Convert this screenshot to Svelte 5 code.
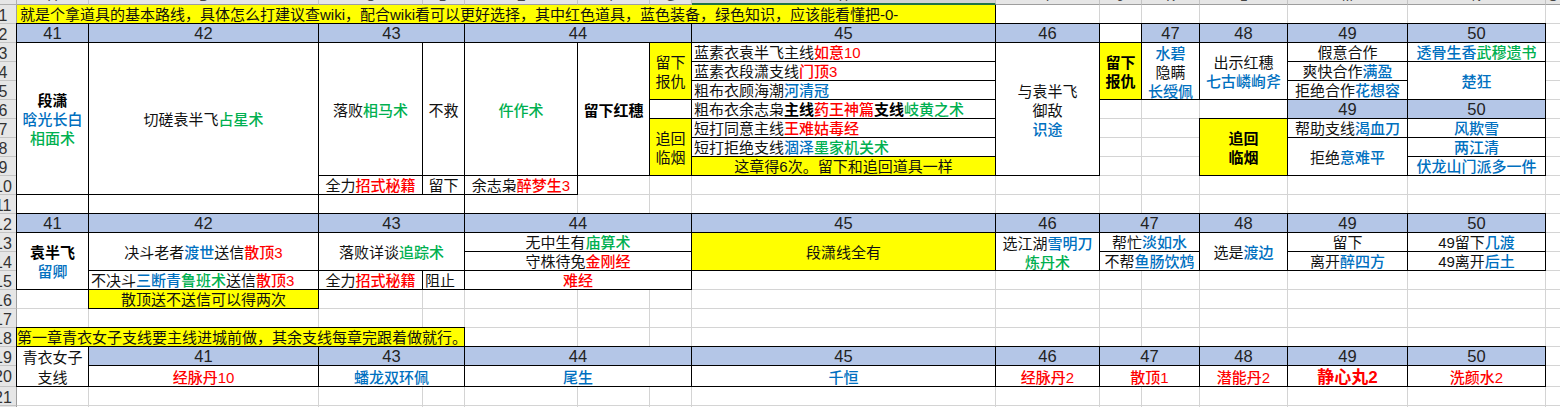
<script>
  // column widths, row header first, so that the black lines land on the sheet's pixels
  const colWidths = [17, 72, 230, 104, 42, 113, 72, 42, 304, 104, 42, 58, 88, 120, 138, 15];
  const rowHeights = [5, 19, 19, 19, 19, 19, 19, 19, 19, 19, 19, 19, 19, 19, 19, 19, 19, 19, 19, 19, 21, 19, 2];
  const letters = ['A', 'B', 'C', 'D', 'E', 'F', 'G', 'H', 'I', 'J', 'K', 'L', 'M', 'N', 'O'];
  const rowNums = Array.from({ length: 22 }, (_, i) => i + 1);

  const tpl = `${rowHeights.map((h) => h + 'px').join(' ')} / ${colWidths.map((w) => w + 'px').join(' ')}`;

  // [col, row, colspan, rowspan, lines ('|' splits), classes]; [r..] red, [b..] blue, [g..] green, [k..] heavy
  const raw = [
    [1, 1, 8, 1, '就是个拿道具的基本路线，具体怎么打建议查wiki，配合wiki看可以更好选择，其中红色道具，蓝色装备，绿色知识，应该能看懂把-0-', 'y left top'],

    [1, 2, 1, 1, '41', 'hd'], [2, 2, 1, 1, '42', 'hd'], [3, 2, 2, 1, '43', 'hd'], [5, 2, 3, 1, '44', 'hd'],
    [8, 2, 1, 1, '45', 'hd'], [9, 2, 1, 1, '46', 'hd'], [10, 2, 1, 1, '', 'ln'], [11, 2, 1, 1, '47', 'hd'],
    [12, 2, 1, 1, '48', 'hd'], [13, 2, 1, 1, '49', 'hd'], [14, 2, 1, 1, '50', 'hd'],

    [1, 3, 1, 8, '[k段潇]|[b晗光长白]|[g相面术]', 'ln mid'],
    [2, 3, 1, 8, '切磋袁半飞[g占星术]', 'ln mid'],
    [3, 3, 1, 7, '落败[g相马术]', 'ln mid'],
    [4, 3, 1, 7, '不救', 'ln mid'],
    [5, 3, 1, 7, '[g仵作术]', 'ln mid'],
    [6, 3, 1, 7, '[k留下红穗]', 'ln mid'],
    [7, 3, 1, 3, '留下|报仇', 'ln mid y'],
    [7, 6, 1, 1, '', 'ln'],
    [7, 7, 1, 3, '追回|临烟', 'ln mid y'],
    [8, 3, 1, 1, '蓝素衣袁半飞主线[r如意10]', 'ln left'],
    [8, 4, 1, 1, '蓝素衣段潇支线[r门顶3]', 'ln left'],
    [8, 5, 1, 1, '粗布衣顾海潮[b河清冠]', 'ln left'],
    [8, 6, 1, 1, '粗布衣余志枭[k主线][r药王神篇][k支线][g岐黄之术]', 'ln left'],
    [8, 7, 1, 1, '短打同意主线[r王难姑毒经]', 'ln left'],
    [8, 8, 1, 1, '短打拒绝支线[b涸泽][g墨家机关术]', 'ln left'],
    [8, 9, 1, 1, '这章得6次。留下和追回道具一样', 'ln y'],
    [9, 3, 1, 7, '与袁半飞|御敌|[b识途]', 'ln mid'],
    [10, 3, 1, 3, '[k留下]|[k报仇]', 'ln mid y'],
    [11, 3, 1, 3, '[b水碧]|隐瞒|[b长绶佩]', 'ln mid'],
    [12, 3, 1, 3, '出示红穗|[b七古嶙峋斧]', 'ln mid'],
    [13, 3, 1, 1, '假意合作', 'ln'],
    [13, 4, 1, 1, '爽快合作[b满盈]', 'ln'],
    [13, 5, 1, 1, '拒绝合作[b花想容]', 'ln'],
    [14, 3, 1, 1, '[b透骨生香][g武穆遗书]', 'ln'],
    [14, 4, 1, 2, '[b楚狂]', 'ln mid'],
    [13, 6, 1, 1, '49', 'hd'], [14, 6, 1, 1, '50', 'hd'],
    [12, 7, 1, 3, '[k追回]|[k临烟]', 'ln mid y'],
    [13, 7, 1, 1, '帮助支线[b渴血刀]', 'ln'],
    [13, 8, 1, 2, '拒绝[b意难平]', 'ln mid'],
    [14, 7, 1, 1, '[b风欺雪]', 'ln'],
    [14, 8, 1, 1, '[b两江清]', 'ln'],
    [14, 9, 1, 1, '[b伏龙山门派多一件]', 'ln'],

    [3, 10, 1, 1, '全力[r招式秘籍]', 'ln'],
    [4, 10, 1, 1, '留下', 'ln'],
    [5, 10, 1, 1, '余志枭[r醉梦生3]', 'ln'],
    [1, 11, 1, 1, '', 'ln'], [2, 11, 1, 1, '', 'ln'], [3, 11, 2, 1, '', 'ln'],

    [1, 12, 1, 1, '41', 'hd'], [2, 12, 1, 1, '42', 'hd'], [3, 12, 2, 1, '43', 'hd'], [5, 12, 3, 1, '44', 'hd'],
    [8, 12, 1, 1, '45', 'hd'], [9, 12, 1, 1, '46', 'hd'], [10, 12, 2, 1, '47', 'hd'], [12, 12, 1, 1, '48', 'hd'],
    [13, 12, 1, 1, '49', 'hd'], [14, 12, 1, 1, '50', 'hd'],

    [1, 13, 1, 3, '[k袁半飞]|[b留卿]', 'ln mid'],
    [2, 13, 1, 2, '决斗老者[b渡世]送信[r散顶3]', 'ln mid'],
    [2, 15, 1, 1, '不决斗[b三断青][g鲁班术]送信[r散顶3]', 'ln left'],
    [3, 13, 2, 2, '落败详谈[g追踪术]', 'ln mid'],
    [3, 15, 1, 1, '全力[r招式秘籍]', 'ln'],
    [4, 15, 1, 1, '阻止', 'ln left'],
    [5, 13, 3, 1, '无中生有[g庙算术]', 'ln'],
    [5, 14, 3, 1, '守株待兔[r金刚经]', 'ln'],
    [5, 15, 3, 1, '[r难经]', 'ln'],
    [8, 13, 1, 2, '段潇线全有', 'ln mid y'],
    [9, 13, 1, 2, '选江湖[b雪明刀]|[g炼丹术]', 'ln mid'],
    [10, 13, 2, 1, '帮忙[b淡如水]', 'ln'],
    [10, 14, 2, 1, '不帮[b鱼肠饮鸩]', 'ln'],
    [12, 13, 1, 2, '选是[b渡边]', 'ln mid'],
    [13, 13, 1, 1, '留下', 'ln'],
    [13, 14, 1, 1, '离开[b醉四方]', 'ln'],
    [14, 13, 1, 1, '49留下[b几渡]', 'ln'],
    [14, 14, 1, 1, '49离开[b后土]', 'ln'],
    [2, 16, 1, 1, '散顶送不送信可以得两次', 'ln y'],

    [1, 18, 4, 1, '第一章青衣女子支线要主线进城前做，其余支线每章完跟着做就行。', 'ln y tight'],
    [1, 19, 1, 2, '青衣女子|支线', 'ln mid wide'],
    [2, 19, 1, 1, '41', 'hd'], [3, 19, 2, 1, '43', 'hd'], [5, 19, 3, 1, '44', 'hd'], [8, 19, 1, 1, '45', 'hd'],
    [9, 19, 1, 1, '46', 'hd'], [10, 19, 2, 1, '47', 'hd'], [12, 19, 1, 1, '48', 'hd'], [13, 19, 1, 1, '49', 'hd'],
    [14, 19, 1, 1, '50', 'hd'],
    [2, 20, 1, 1, '[r经脉丹10]', 'ln'],
    [3, 20, 2, 1, '[b蟠龙双环佩]', 'ln'],
    [5, 20, 3, 1, '[b尾生]', 'ln'],
    [8, 20, 1, 1, '[b千恒]', 'ln'],
    [9, 20, 1, 1, '[r经脉丹2]', 'ln'],
    [10, 20, 2, 1, '[r散顶1]', 'ln'],
    [12, 20, 1, 1, '[r潜能丹2]', 'ln'],
    [13, 20, 1, 1, '[r静心丸2]', 'ln big'],
    [14, 20, 1, 1, '[r洗颜水2]', 'ln']
  ];

  function parseLine(line) {
    const segs = [];
    const re = /\[([rbgk])([^\]]*)\]|([^\[]+)/g;
    let m;
    while ((m = re.exec(line))) {
      if (m[3]) segs.push({ c: '', t: m[3] });
      else segs.push({ c: m[1], t: m[2] });
    }
    return segs;
  }

  const cells = raw.map(([col, row, cs, rs, text, cls]) => ({
    area: `${row + 1} / ${col + 1} / span ${rs} / span ${cs}`,
    lines: text ? text.split('|').map(parseLine) : [],
    cls
  }));
</script>

<div class="sheet" style="grid-template: {tpl}">
  <div class="corner"></div>
  {#each letters as l, i}
    <div class="colhead" class:sel={l === 'H'} style="grid-area: 1 / {i + 2}"><span>{l}</span></div>
  {/each}
  {#each rowNums as n}
    <div class="rowhead" style="grid-area: {n + 1} / 1"><span>{n}</span></div>
    {#each letters as l, i}
      <div class="blank" style="grid-area: {n + 1} / {i + 2}"></div>
    {/each}
  {/each}

  {#each cells as cell}
    <div class="cell {cell.cls}" style="grid-area: {cell.area}">
      {#each cell.lines as segs}
        <div class="line">
          {#each segs as s}<span class={s.c}>{s.t}</span>{/each}
        </div>
      {/each}
    </div>
  {/each}
</div>

<style>
  :global(body) {
    margin: 0;
    background: #fff;
    overflow: hidden;
  }

  .sheet {
    display: grid;
    width: 1560px;
    height: 407px;
    overflow: hidden;
    font-family: "Liberation Sans", "Noto Sans CJK SC", sans-serif;
    font-size: 15px;
    color: #111;
  }

  .corner {
    grid-area: 1 / 1;
    background: #e6e6e6;
    border-right: 1px solid #b0b0b0;
    border-bottom: 1px solid #b0b0b0;
    box-sizing: border-box;
  }

  .colhead {
    box-sizing: border-box;
    background: #e6e6e6;
    border-right: 1px solid #c4c4c4;
    border-bottom: 1px solid #9e9e9e;
    overflow: hidden;
    text-align: center;
    color: #444;
    font-size: 13px;
    line-height: 14px;
  }

  .colhead span {
    display: block;
    margin-top: -10px;
  }

  .colhead.sel {
    background: #d2d2d2;
    border-bottom: 2px solid #217346;
  }

  .rowhead {
    box-sizing: border-box;
    background: #e6e6e6;
    border-right: 1px solid #9e9e9e;
    border-bottom: 1px solid #c4c4c4;
    overflow: hidden;
    color: #333;
    font-family: "Liberation Sans Narrow", "Liberation Sans", sans-serif;
    font-size: 16px;
    line-height: 22px;
  }

  .rowhead span {
    display: block;
    width: 26px;
    margin-left: -10px;
    text-align: center;
  }

  .blank {
    box-sizing: border-box;
    border-right: 1px solid #d4d4d4;
    border-bottom: 1px solid #d4d4d4;
  }

  .cell {
    display: flex;
    flex-direction: column;
    align-items: center;
    justify-content: flex-end;
    background: #fff;
    white-space: nowrap;
    line-height: 19px;
    min-width: 0;
    min-height: 0;
    margin: 0 1px 1px 0;
  }

  /* the taller line box drops the glyphs one pixel, as Excel sets them */
  .line {
    height: 19px;
    line-height: 21px;
  }

  .ln,
  .hd {
    box-shadow: 0 0 0 1px #000;
  }

  .hd {
    background: #b4c6e7;
    font-family: "Liberation Sans Narrow", "Liberation Sans", sans-serif;
    font-size: 16.5px;
    color: #222;
  }

  .mid {
    justify-content: center;
  }

  .y {
    background: #ff0;
  }

  .top {
    box-shadow: 1px 0 0 #000;
  }

  .left {
    align-items: flex-start;
    padding-left: 2px;
  }

  .top.left {
    padding-left: 3px;
  }

  .tight {
    align-items: flex-start;
  }

  .wide .line {
    height: 20px;
  }

  .big {
    font-size: 17px;
    font-weight: 700;
  }

  .r {
    color: #f00;
    font-weight: 500;
  }

  .b {
    color: #0070c0;
    font-weight: 500;
  }

  .g {
    color: #00b050;
    font-weight: 500;
  }

  .big .r {
    font-weight: 700;
  }

  .k {
    font-weight: 600;
    color: #000;
  }
</style>
